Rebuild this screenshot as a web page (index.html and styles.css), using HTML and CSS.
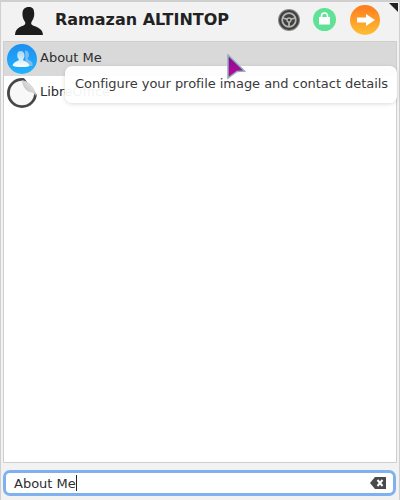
FILE: index.html
```html
<!DOCTYPE html>
<html lang="en">
<head>
    <meta charset="UTF-8">
    <title>Launcher</title>
    <link rel="stylesheet" href="styles.css">
</head>
<body>
    <div class="window">
        <!-- Header -->
        <div class="header">
            <svg class="avatar" width="30" height="28" viewBox="0 0 32 32">
                <path fill="#1c1c1c" d="M16 0c-5 0-7.500 3-7.500 8 0 3 .8 5.500 2 7.500.7 1.200 1.300 2 1.300 3.200 0 1.500-1.300 2.300-3.500 3.100C4 23.500.5 25.500 0 32h32c-.3-6.500-5.500-8.500-10-10.200-2.200-.8-3.500-1.600-3.500-3.100 0-1.200.6-2 1.300-3.200 1.200-2 2.200-4.500 2.200-7.500 0-5-1.500-8-6-8z"/>
            </svg>
            <div class="user-name">Ramazan ALTINTOP</div>
            <svg class="btn-system" width="22" height="22" viewBox="0 0 22 22">
                <circle cx="11" cy="11" r="11" fill="#8a8a8a"/>
                <circle cx="11" cy="11" r="10" fill="#3f3f3f"/>
                <circle cx="11" cy="11" r="6.800" fill="none" stroke="#b4b4b0" stroke-width="1.800"/>
                <circle cx="11" cy="11" r="2" fill="none" stroke="#b4b4b0" stroke-width="1.400"/>
                <path stroke="#b4b4b0" stroke-width="1.800" d="M4.500 9l4.600 1.200M13 10.200l4.500-1.200M11 13v5"/>
            </svg>
            <svg class="btn-lock" width="23" height="23" viewBox="0 0 23 23">
                <circle cx="11.500" cy="11.500" r="11.500" fill="#5de296"/>
                <rect x="6" y="9" width="11" height="7.500" fill="#fff"/>
                <path fill="none" stroke="#fff" stroke-width="1.600" d="M8.500 9.500V8a3 3 0 0 1 6 0v1.500"/>
            </svg>
            <svg class="btn-logout" width="30" height="30" viewBox="0 0 30 30">
                <defs>
                    <linearGradient id="orange" x1="0" y1="0" x2="0" y2="1">
                        <stop offset="0" stop-color="#ff7a1e"/>
                        <stop offset="1" stop-color="#fdc033"/>
                    </linearGradient>
                </defs>
                <circle cx="15" cy="15" r="15" fill="url(#orange)"/>
                <path fill="#fff" d="M7 12.500h9V9l9 6-9 6v-3.500H7z"/>
            </svg>
            <div class="corner"></div>
        </div>

        <!-- Results -->
        <div class="list">
            <div class="row selected">
                <svg class="row-icon" width="30" height="30" viewBox="0 0 30 30">
                    <defs>
                        <linearGradient id="blue" x1="0" y1="0" x2="0" y2="1">
                            <stop offset="0" stop-color="#1c8ff0"/>
                            <stop offset="1" stop-color="#22b4ff"/>
                        </linearGradient>
                        <linearGradient id="person" x1="0" y1="0" x2="0" y2="1">
                            <stop offset="0" stop-color="#a6d6f6"/>
                            <stop offset="1" stop-color="#ffffff"/>
                        </linearGradient>
                    </defs>
                    <circle cx="15" cy="15" r="15" fill="url(#blue)"/>
                    <path fill="#7dbcee" d="M18 6.500c2.700 0 4 2 4 4.300 0 1.800-.8 3-1.500 4 0 1 3.500 1.500 5 4.200v3h-7z"/>
                    <path fill="url(#person)" d="M13.500 7c2.500 0 4 2 4 4.500 0 1.800-.8 3.200-1.500 4.200 0 1.300 5.500 1.800 6.500 5.800-1 1-2 1.500-7.500 1.500-5 0-7.500-.5-9.500-1.500 1-4 6-4.500 6.500-5.800-.8-1-1.800-2.400-1.800-4.200C10.200 9 11 7 13.500 7z"/>
                </svg>
                <span>About Me</span>
            </div>
            <div class="row">
                <svg class="row-icon" width="30" height="30" viewBox="0 0 30 30">
                    <defs>
                        <linearGradient id="curl" x1="0" y1="1" x2="1" y2="0">
                            <stop offset="0" stop-color="#b8b8b8"/>
                            <stop offset="1" stop-color="#f2f2f2"/>
                        </linearGradient>
                    </defs>
                    <circle cx="15" cy="15" r="13.600" fill="#f8f8f8" stroke="#474747" stroke-width="2.800"/>
                    <path fill="#fff" d="M17 0h13v17z"/>
                    <path fill="url(#curl)" stroke="#c4c4c4" stroke-width=".6" d="M15 2.500c1.500 5.500 3 10.500 9.500 11.500 2 .4 3 1.500 4.500 3.500C27.500 10 22 3.500 15 2.500z"/>
                </svg>
                <span>LibreOffice</span>
            </div>
        </div>

        <!-- Search -->
        <div class="search">
            <span class="search-text">About Me</span>
            <span class="caret"></span>
            <svg class="clear" width="16" height="12" viewBox="0 0 16 12">
                <path fill="#4a4a4a" d="M5 0h11v12H5L0 6z"/>
                <path stroke="#fff" stroke-width="2" d="M7.500 3l5 6M12.500 3l-5 6"/>
            </svg>
        </div>
    </div>

    <div class="tooltip">Configure your profile image and contact details</div>

    <svg class="pointer" width="20" height="26" viewBox="0 0 20 26">
        <defs>
            <linearGradient id="purple" x1="0" y1="0" x2="0" y2="1">
                <stop offset="0" stop-color="#7d0f96"/>
                <stop offset="1" stop-color="#c0089c"/>
            </linearGradient>
        </defs>
        <path fill="url(#purple)" stroke="#8fb0b4" stroke-width="1.500" d="M1 1l16.500 16-7.500 .5-9 6.500z"/>
    </svg>
</body>
</html>
```

FILE: styles.css
```css
html, body {
    margin: 0;
    padding: 0;
}

body {
    width: 400px;
    height: 500px;
    overflow: hidden;
    font-family: "DejaVu Sans", sans-serif;
    color: #2e2e2e;
    background: #f2f2f2;
}

.window {
    box-sizing: border-box;
    width: 400px;
    height: 500px;
    border-top: 2px solid #cfcfcf;
    border-left: 1px solid #cfcfcf;
    border-right: 1px solid #cfcfcf;
    display: flex;
    flex-direction: column;
}

.header {
    position: relative;
    box-sizing: border-box;
    height: 39px;
    flex: none;
    display: flex;
    align-items: center;
    padding: 0 0 4px 13px;
}

.avatar {
    margin-top: 2px;
}

.user-name {
    margin-left: 11px;
    flex: 1;
    font-size: 16px;
    font-weight: bold;
    color: #222;
}

.btn-system {
    margin-right: 13px;
}

.btn-lock {
    margin-right: 14px;
}

.btn-logout {
    margin-right: 19px;
}

.corner {
    position: absolute;
    top: 1px;
    right: 1px;
    width: 0;
    height: 0;
    border-top: 9px solid #222;
    border-left: 9px solid transparent;
}

.list {
    flex: 1;
    margin: 0 2px;
    background: #fff;
    border: 1px solid #cfcfcf;
}

.row {
    height: 34px;
    display: flex;
    align-items: center;
    padding-left: 3px;
    font-size: 13px;
    line-height: 32px;
}

.row span {
    margin-top: -2px;
}

.row.selected {
    background: #d9d9d9;
}

.row-icon {
    margin-right: 3px;
}

.search {
    margin: 7px 3px 4px 2px;
    height: 20px;
    flex: none;
    display: flex;
    align-items: center;
    padding: 0 7px 0 8px;
    background: #fff;
    border: 3px solid #7fb1ee;
    border-radius: 7px;
    font-size: 13px;
}

.caret {
    width: 1px;
    height: 16px;
    background: #222;
    flex: none;
}

.clear {
    margin-left: auto;
}

.tooltip {
    position: absolute;
    left: 65px;
    top: 66px;
    width: 332px;
    height: 37px;
    box-sizing: border-box;
    padding-left: 10px;
    line-height: 36px;
    font-size: 13px;
    letter-spacing: -0.04px;
    white-space: nowrap;
    color: #3a3a3a;
    background: rgba(255, 255, 255, 0.94);
    border-radius: 7px;
    box-shadow: 0 1px 4px rgba(0, 0, 0, 0.15);
}

.pointer {
    position: absolute;
    left: 227px;
    top: 54px;
}
```
